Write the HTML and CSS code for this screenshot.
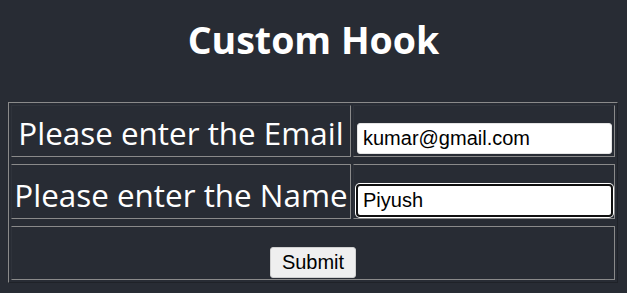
FILE: index.html
```html
<!DOCTYPE html>
<html lang="en">
<head>
  <meta charset="UTF-8">
  <meta name="viewport" content="width=device-width, initial-scale=1.0">
  <title>Custom Hook</title>
  <link rel="stylesheet" href="styles.css">
</head>
<body>
  <div class="app">
    <h1 class="title">Custom Hook</h1>

    <!-- Form laid out in a bordered table -->
    <form class="frame">
      <table class="fields">
        <tr class="row row-email">
          <td class="label">Please enter the Email</td>
          <td class="field"><input type="text" class="input" value="kumar@gmail.com"></td>
        </tr>
        <tr class="row row-name">
          <td class="label">Please enter the Name</td>
          <td class="field"><input type="text" class="input is-focused" value="Piyush"></td>
        </tr>
        <tr class="row row-submit">
          <td class="actions" colspan="2"><button type="button" class="submit">Submit</button></td>
        </tr>
      </table>
    </form>
  </div>
</body>
</html>
```

FILE: styles.css
```css
/* Dark page like the default React app */
body {
  background-color: #282c34;
  color: white;
  margin: 8px;
  font-family: 'Open Sans', sans-serif;
}

.title {
  text-align: center;
  font-size: 37.5px;
  font-weight: bold;
  margin: 0;
  padding: 7px 0 0;
  height: 94px;
  line-height: 50px;
  box-sizing: border-box;
}

/* Outer border of the table: light top/left, dark bottom/right */
.frame {
  width: 610px;
  box-sizing: border-box;
  border: 1px solid #1f2228;
  border-top-color: #8a8a8a;
  border-left-color: #8a8a8a;
  margin: 0;
  padding: 0;
}

.fields {
  width: 608px;
  border-collapse: separate;
  border-spacing: 2px 7px;
  margin: -5px 0;
}

.fields td {
  padding: 0;
  border: 1px solid #2f333b;
  border-right-color: #8a8a8a;
  border-bottom-color: #8a8a8a;
  vertical-align: bottom;
}

.row-name td,
.row-submit td {
  border-top-color: #8a8a8a;
}

.row-email { height: 52px; }
.row-name { height: 55px; }
.row-submit { height: 54px; }

.label {
  width: 338px;
  text-align: center;
  font-size: 31.4px;
  line-height: 40px;
  white-space: nowrap;
}

.fields td.label {
  padding-bottom: 3px;
}

.fields td.field {
  padding: 0 2px 2px 3px;
}

.input {
  display: block;
  width: 100%;
  height: 31px;
  box-sizing: border-box;
  border: 1px solid #e4e4e4;
  border-radius: 3px;
  background-color: white;
  color: black;
  padding: 0 5px;
  font-family: 'Liberation Sans', Arial, sans-serif;
  font-size: 20px;
}

/* Chrome style focus ring on the active field */
.input.is-focused {
  outline: 2px solid #101010;
  outline-offset: -1px;
  box-shadow: 0 0 0 2px white;
}

.fields td.actions {
  text-align: center;
  padding-bottom: 1px;
}

.submit {
  height: 31px;
  padding: 0 11px;
  font-family: 'Liberation Sans', Arial, sans-serif;
  font-size: 20px;
  color: black;
  background-color: #efefef;
  border: 1px solid #d0d0d0;
  border-radius: 3px;
  cursor: pointer;
}
```
